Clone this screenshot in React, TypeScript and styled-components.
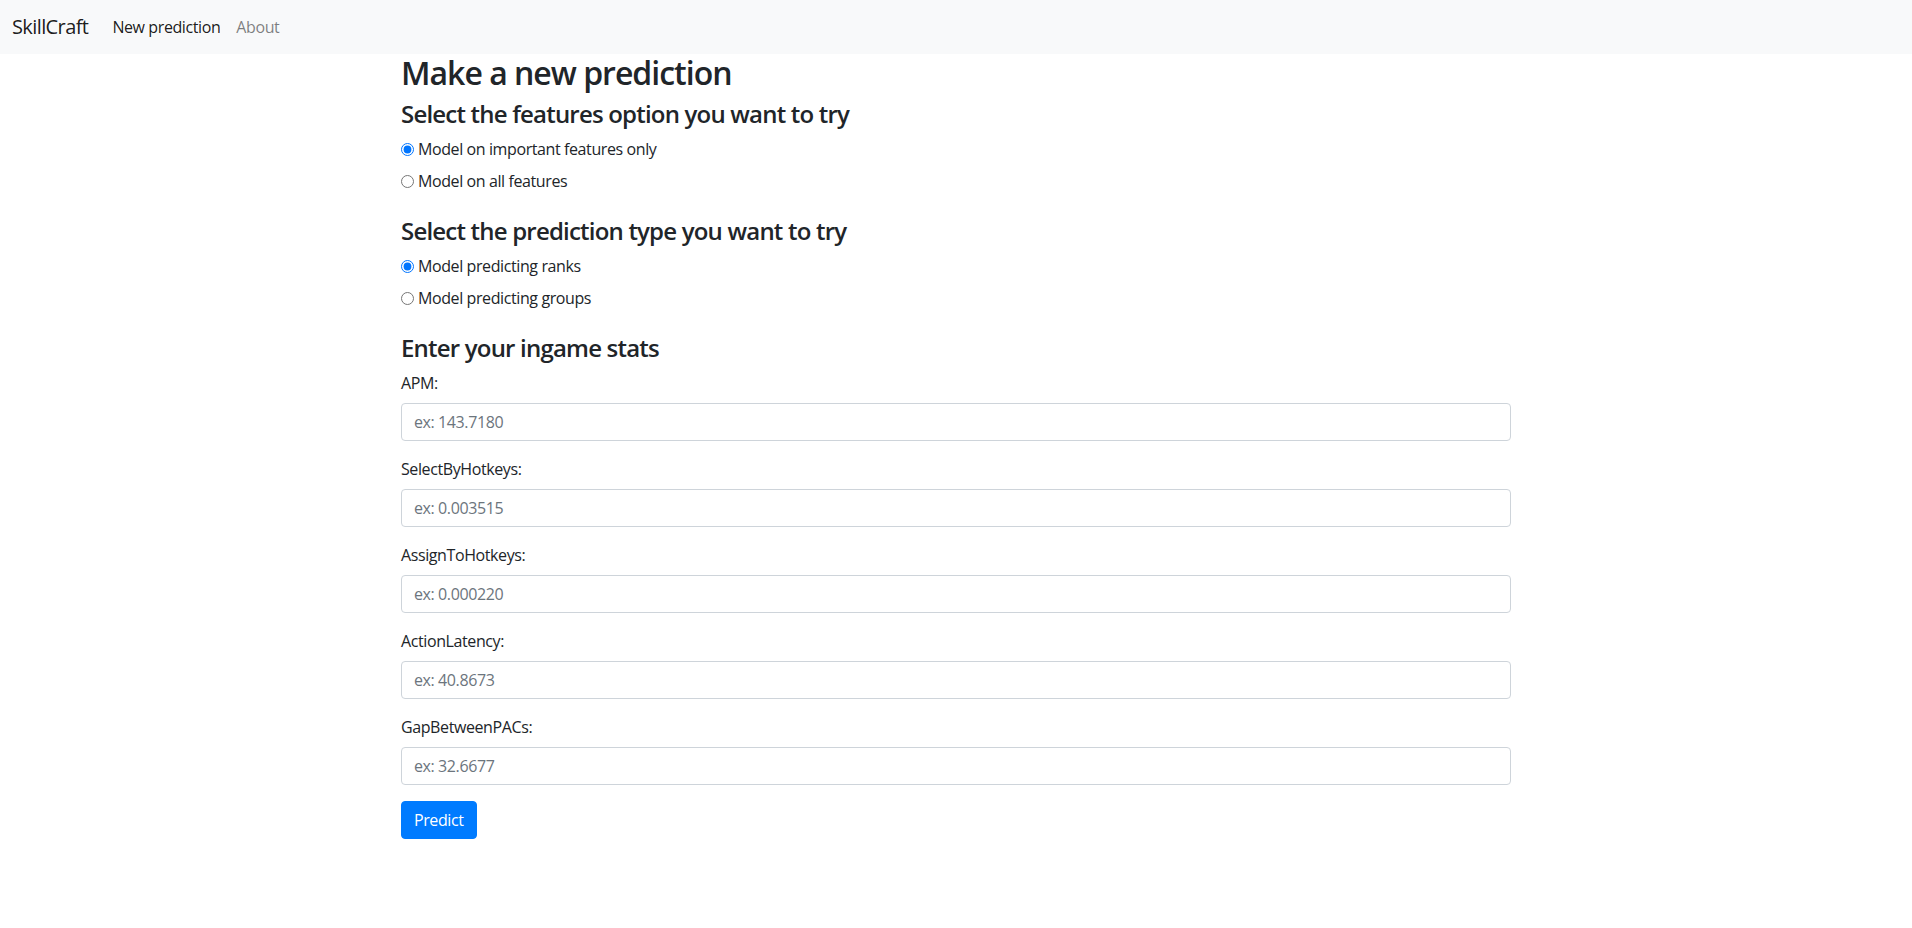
import React from "react";
import styled, { createGlobalStyle } from "styled-components";

const Global = createGlobalStyle`
  html, body { margin: 0; padding: 0; background: #fff; }
  body {
    font-family: "Open Sans", "Noto Sans", "Liberation Sans", sans-serif;
    font-size: 16px;
    line-height: 1.5;
    color: #212529;
    letter-spacing: -0.4px;
  }
  * { box-sizing: border-box; }
`;

const Navbar = styled.nav`
  height: 54px;
  background: #f8f9fa;
  display: flex;
  align-items: center;
  padding: 0 12px;
`;

const Brand = styled.a`
  font-size: 20px;
  line-height: 30px;
  letter-spacing: -0.6px;
  color: rgba(0, 0, 0, 0.9);
  text-decoration: none;
  margin-right: 16px;
`;

const NavLink = styled.a<{ $active?: boolean }>`
  font-size: 16px;
  line-height: 24px;
  padding: 8px;
  text-decoration: none;
  color: ${(p) => (p.$active ? "rgba(0,0,0,0.9)" : "rgba(0,0,0,0.5)")};
`;

const Container = styled.main`
  width: 1140px;
  margin: 0 auto;
  padding: 0 15px;
`;

const Title = styled.h2`
  margin: 0 0 8px;
  font-size: 32px;
  line-height: 38.4px;
  font-weight: 600;
  letter-spacing: -1px;
`;

const SubTitle = styled.h4`
  margin: 0 0 8px;
  font-size: 24px;
  line-height: 28.8px;
  font-weight: 600;
  letter-spacing: -0.8px;
`;

const RadioGroup = styled.div`
  margin-bottom: 24px;
`;

const RadioRow = styled.label`
  display: flex;
  align-items: center;
  height: 24px;
  margin-bottom: 8px;
  font-size: 16px;
`;

const Radio = styled.input`
  width: 13px;
  height: 13px;
  margin: 0 4px 0 0;
  accent-color: #0075ff;
`;

const FormGroup = styled.div`
  margin-bottom: 16px;
`;

const Label = styled.label`
  display: block;
  line-height: 24px;
  margin-bottom: 8px;
`;

const Input = styled.input`
  display: block;
  width: 100%;
  height: 38px;
  padding: 6px 12px;
  font-family: inherit;
  font-size: 16px;
  line-height: 24px;
  letter-spacing: -0.4px;
  color: #495057;
  border: 1px solid #ced4da;
  border-radius: 4px;
  background: #fff;
  outline: none;
  &::placeholder { color: #6c757d; opacity: 1; }
`;

const Button = styled.button`
  height: 38px;
  padding: 6px 12px;
  font-family: inherit;
  font-size: 16px;
  line-height: 24px;
  letter-spacing: -0.4px;
  color: #fff;
  background: #007bff;
  border: 1px solid #007bff;
  border-radius: 4px;
`;

const fields = [
  { name: "APM", ph: "ex: 143.7180" },
  { name: "SelectByHotkeys", ph: "ex: 0.003515" },
  { name: "AssignToHotkeys", ph: "ex: 0.000220" },
  { name: "ActionLatency", ph: "ex: 40.8673" },
  { name: "GapBetweenPACs", ph: "ex: 32.6677" },
];

export default function App() {
  return (
    <>
      <Global />
      <Navbar>
        <Brand href="#">SkillCraft</Brand>
        <NavLink $active href="#">New prediction</NavLink>
        <NavLink href="#">About</NavLink>
      </Navbar>
      <Container>
        <Title>Make a new prediction</Title>
        <SubTitle>Select the features option you want to try</SubTitle>
        <RadioGroup>
          <RadioRow>
            <Radio type="radio" name="features" defaultChecked />
            Model on important features only
          </RadioRow>
          <RadioRow>
            <Radio type="radio" name="features" />
            Model on all features
          </RadioRow>
        </RadioGroup>
        <SubTitle>Select the prediction type you want to try</SubTitle>
        <RadioGroup>
          <RadioRow>
            <Radio type="radio" name="ptype" defaultChecked />
            Model predicting ranks
          </RadioRow>
          <RadioRow>
            <Radio type="radio" name="ptype" />
            Model predicting groups
          </RadioRow>
        </RadioGroup>
        <SubTitle>Enter your ingame stats</SubTitle>
        {fields.map((f) => (
          <FormGroup key={f.name}>
            <Label>{f.name}:</Label>
            <Input type="text" placeholder={f.ph} />
          </FormGroup>
        ))}
        <Button>Predict</Button>
      </Container>
    </>
  );
}
